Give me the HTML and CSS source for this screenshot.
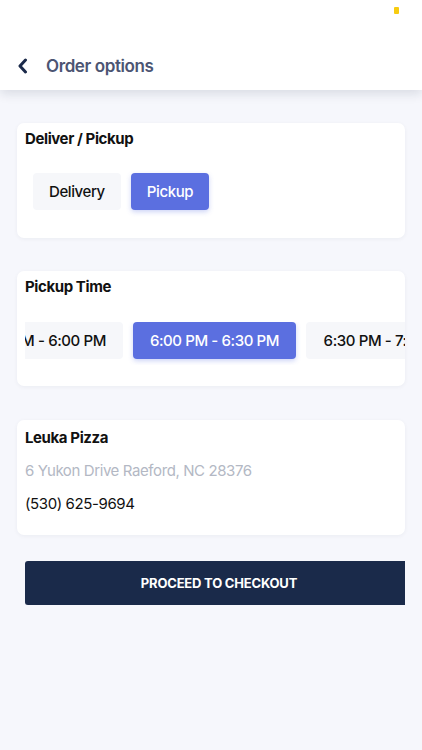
FILE: index.html
```html
<!DOCTYPE html>
<html lang="en">
<head>
  <meta charset="UTF-8">
  <meta name="viewport" content="width=device-width, initial-scale=1.0">
  <title>Order options</title>
  <link rel="stylesheet" href="styles.css">
</head>
<body>
<header class="topbar">
  <div class="status">
    <span class="status__dot"></span>
  </div>
  <div class="nav">
    <button class="nav__back" aria-label="Back">
      <svg width="12" height="16" viewBox="0 0 12 16">
        <path d="M8.5 2 L3 8 L8.5 14" fill="none" stroke="#1b2a4a" stroke-width="3" stroke-linecap="round" stroke-linejoin="round"/>
      </svg>
    </button>
    <h1 class="nav__title">Order options</h1>
  </div>
</header>
<main class="content">
  <section class="card">
    <h2 class="card__title">Deliver / Pickup</h2>
    <div class="choices">
      <button class="chip">Delivery</button>
      <button class="chip chip--active">Pickup</button>
    </div>
  </section>
  <section class="card card--times">
    <h2 class="card__title">Pickup Time</h2>
    <div class="times">
      <div class="times__track">
        <button class="chip chip--time">5:30 PM - 6:00 PM</button>
        <button class="chip chip--time chip--active">6:00 PM - 6:30 PM</button>
        <button class="chip chip--time">6:30 PM - 7:00 PM</button>
      </div>
    </div>
  </section>
  <section class="card card--store">
    <h2 class="card__title">Leuka Pizza</h2>
    <p class="store__address">6 Yukon Drive Raeford, NC 28376</p>
    <p class="store__phone">(530) 625-9694</p>
  </section>
  <div class="checkout">
    <button class="checkout__btn">PROCEED TO CHECKOUT</button>
  </div>
</main>
</body>
</html>
```

FILE: styles.css
```css
* {
  box-sizing: border-box;
}

body {
  margin: 0;
  font-family: Inter, "Noto Sans", sans-serif;
  background: #f6f7fc;
  color: #111;
  height: 750px;
  letter-spacing: -0.4px;
}

button {
  font-family: inherit;
  letter-spacing: inherit;
  border: none;
  cursor: pointer;
}

.topbar {
  background: #fff;
  height: 90px;
  box-shadow: 0 4px 10px rgba(20, 30, 60, 0.12);
  position: relative;
}

.status {
  height: 44px;
  display: flex;
  justify-content: flex-end;
  padding: 7px 23px 0 0;
}

.status__dot {
  width: 5px;
  height: 7px;
  border-radius: 1px;
  background: #f7cc10;
}

.nav {
  display: flex;
  align-items: center;
  height: 44px;
  padding-left: 17px;
}

.nav__back {
  background: none;
  padding: 0;
  width: 29px;
  height: 20px;
  display: flex;
  align-items: center;
}

.nav__title {
  margin: 0;
  font-size: 17px;
  font-weight: 600;
  color: #4c5573;
}

.content {
  padding: 33px 17px 0;
  display: flex;
  flex-direction: column;
  gap: 33px;
}

.card {
  background: #fff;
  border-radius: 7px;
  box-shadow: 0 1px 4px rgba(20, 30, 60, 0.05);
  height: 115px;
  padding: 7px 8px;
}

.card--store {
  margin-top: 1px;
}

.card__title {
  margin: 0;
  font-size: 15px;
  font-weight: 700;
  line-height: 18px;
}

.choices {
  display: flex;
  gap: 10px;
  margin: 25px 0 0 8px;
}

.chip {
  height: 37px;
  padding: 0 16px;
  border-radius: 4px;
  background: #f6f7fa;
  color: #111;
  font-size: 15px;
  font-weight: 500;
}

.chip--active {
  background: #5b6fe0;
  color: #fff;
  box-shadow: 0 2px 5px rgba(91, 111, 224, 0.3);
}

.card--times {
  padding-right: 0;
}

.times {
  overflow: hidden;
  margin-top: 26px;
  padding-bottom: 6px;
}

.times__track {
  display: flex;
  gap: 10px;
  margin-left: -65px;
  width: max-content;
}

.chip--time {
  width: 163px;
  padding: 0;
}

.card--store .card__title {
  margin-top: 2px;
}

.store__address {
  margin: 14px 0 0;
  font-size: 15px;
  line-height: 20px;
  color: #b3b8c4;
}

.store__phone {
  margin: 13px 0 0;
  font-size: 15px;
  line-height: 20px;
  color: #111;
}

.checkout {
  overflow: hidden;
  margin: -7px 0 0 8px;
}

.checkout__btn {
  width: 388px;
  height: 44px;
  border-radius: 3px;
  background: #1a2a4a;
  color: #fff;
  font-size: 13px;
  font-weight: 700;
  letter-spacing: -0.2px;
  box-shadow: 0 3px 6px rgba(20, 30, 60, 0.15);
}
```
